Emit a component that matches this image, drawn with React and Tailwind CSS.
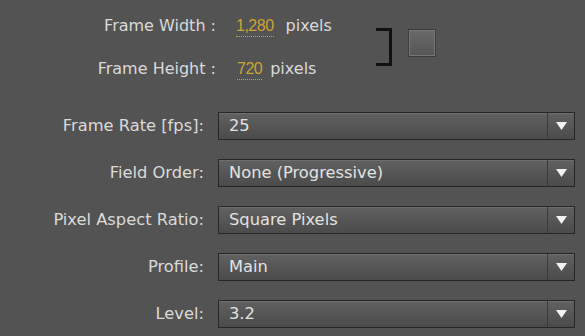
import React from 'react';

const rows = [
  { label: 'Frame Rate [fps]:', value: '25' },
  { label: 'Field Order:', value: 'None (Progressive)' },
  { label: 'Pixel Aspect Ratio:', value: 'Square Pixels' },
  { label: 'Profile:', value: 'Main' },
  { label: 'Level:', value: '3.2' },
];

function Select({ value }) {
  return (
    <div className="flex h-[28px] w-[357px] border border-[#262626] bg-gradient-to-b from-[#616161] to-[#4b4b4b] shadow-[inset_0_1px_0_#6e6e6e]">
      <div className="flex flex-1 items-center pl-[10px] text-[16.3px] text-[#e2e2e2]">{value}</div>
      <div className="w-px bg-[#3a3a3a]" />
      <div className="flex w-[26px] items-center justify-center">
        <svg width="11" height="8" viewBox="0 0 11 8">
          <path d="M0 0 H11 L5.5 8 Z" fill="#f2f2f2" />
        </svg>
      </div>
    </div>
  );
}

function Num({ children, className }) {
  return (
    <span
      className={`border-b border-dotted border-[#c9a53a] leading-[20px] tracking-[-0.5px] text-[#cda233] ${className}`}
      style={{ fontFamily: '"Liberation Sans", sans-serif' }}
    >
      {children}
    </span>
  );
}

export default function App() {
  return (
    <div
      className="h-[336px] w-[585px] bg-[#535353] text-[#dadada]"
      style={{ fontFamily: '"DejaVu Sans", "Noto Sans", sans-serif' }}
    >
      {/* frame size */}
      <div className="flex pt-[14px]">
        <div className="flex w-[352px] shrink-0 flex-col gap-[19px] text-[16px]">
          <div className="flex items-center">
            <span className="w-[222px] shrink-0 pr-[6px] text-right">Frame Width :</span>
            <Num className="ml-[14px]">1,280</Num>
            <span className="ml-[12px]">pixels</span>
          </div>
          <div className="flex items-center">
            <span className="w-[222px] shrink-0 pr-[6px] text-right">Frame Height :</span>
            <Num className="ml-[15px]">720</Num>
            <span className="ml-[8px]">pixels</span>
          </div>
        </div>
        <div className="ml-[24px] mt-[14px] h-[38px] w-[16px] shrink-0 border-y-[3px] border-r-[3px] border-[#111]" />
        <div className="ml-[16px] mt-[15px] h-[28px] w-[28px] shrink-0 border border-[#3c3c3c] bg-gradient-to-b from-[#6a6a6a] to-[#555] shadow-[inset_0_0_0_1px_#777]" />
      </div>

      {/* selects */}
      <div className="mt-[31px] flex flex-col gap-[19px]">
        {rows.map((r) => (
          <div key={r.label} className="flex items-center">
            <span className="w-[204px] shrink-0 text-right text-[16.3px]">{r.label}</span>
            <div className="ml-[14px]">
              <Select value={r.value} />
            </div>
          </div>
        ))}
      </div>
    </div>
  );
}
